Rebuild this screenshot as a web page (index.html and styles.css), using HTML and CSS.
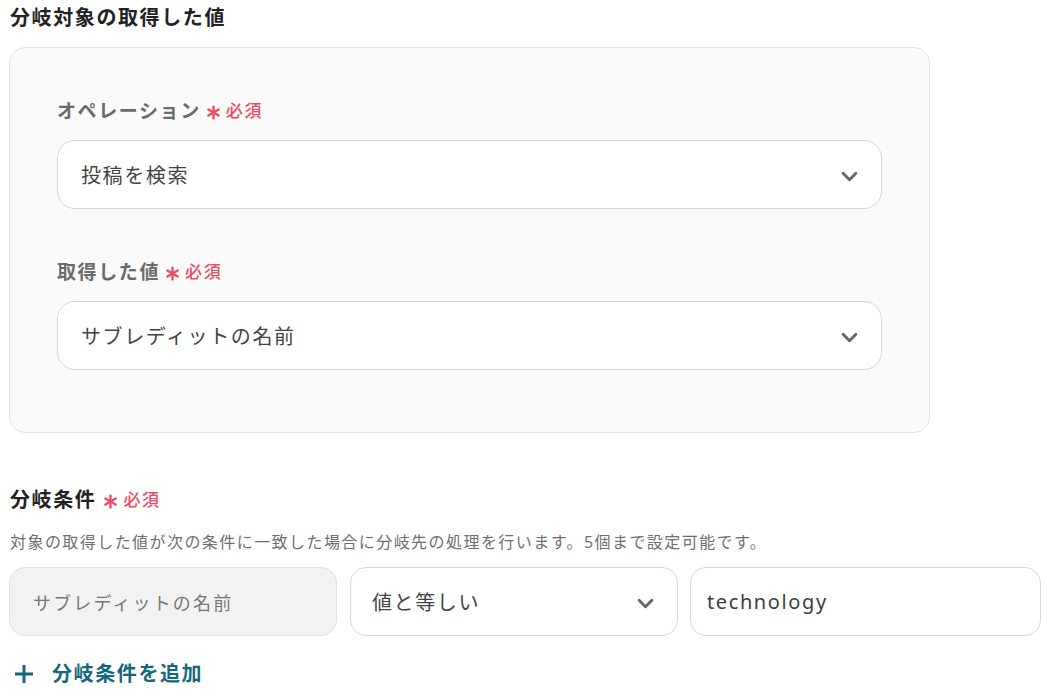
FILE: index.html
```html
<!DOCTYPE html>
<html lang="ja">
<head>
<meta charset="utf-8">
<title>分岐</title>
<link rel="stylesheet" href="styles.css">
</head>
<body>
<div class="page">
  <h2 class="section-title">分岐対象の取得した値</h2>
  <div class="panel">
    <div class="field">
      <div class="label">オペレーション<span class="req"><svg class="ast" viewBox="0 0 14 14"><g stroke="currentColor" stroke-width="2.2" stroke-linecap="round"><line x1="7" y1="1.5" x2="7" y2="12.5"/><line x1="2.2" y1="4.2" x2="11.8" y2="9.8"/><line x1="2.2" y1="9.8" x2="11.8" y2="4.2"/></g></svg>必須</span></div>
      <div class="select"><span class="value">投稿を検索</span><svg class="chev" viewBox="0 0 16 10"><polyline points="2,2 8,8 14,2" fill="none" stroke="currentColor" stroke-width="2.8" stroke-linecap="round" stroke-linejoin="round"/></svg></div>
    </div>
    <div class="field">
      <div class="label">取得した値<span class="req"><svg class="ast" viewBox="0 0 14 14"><g stroke="currentColor" stroke-width="2.2" stroke-linecap="round"><line x1="7" y1="1.5" x2="7" y2="12.5"/><line x1="2.2" y1="4.2" x2="11.8" y2="9.8"/><line x1="2.2" y1="9.8" x2="11.8" y2="4.2"/></g></svg>必須</span></div>
      <div class="select"><span class="value">サブレディットの名前</span><svg class="chev" viewBox="0 0 16 10"><polyline points="2,2 8,8 14,2" fill="none" stroke="currentColor" stroke-width="2.8" stroke-linecap="round" stroke-linejoin="round"/></svg></div>
    </div>
  </div>

  <h2 class="section-title second">分岐条件<span class="req title-req"><svg class="ast" viewBox="0 0 14 14"><g stroke="currentColor" stroke-width="2.2" stroke-linecap="round"><line x1="7" y1="1.5" x2="7" y2="12.5"/><line x1="2.2" y1="4.2" x2="11.8" y2="9.8"/><line x1="2.2" y1="9.8" x2="11.8" y2="4.2"/></g></svg>必須</span></h2>
  <p class="desc">対象の取得した値が次の条件に一致した場合に分岐先の処理を行います。5個まで設定可能です。</p>

  <div class="cond-row">
    <div class="cond cond-fixed">サブレディットの名前</div>
    <div class="cond cond-select"><span class="value">値と等しい</span><svg class="chev" viewBox="0 0 16 10"><polyline points="2,2 8,8 14,2" fill="none" stroke="currentColor" stroke-width="2.8" stroke-linecap="round" stroke-linejoin="round"/></svg></div>
    <div class="cond cond-input">technology</div>
  </div>

  <div class="add"><svg class="plus" viewBox="0 0 20 20"><g stroke="currentColor" stroke-width="3"><line x1="10" y1="1" x2="10" y2="19"/><line x1="1" y1="10" x2="19" y2="10"/></g></svg><span>分岐条件を追加</span></div>
</div>
</body>
</html>
```

FILE: styles.css
```css
* { box-sizing: border-box; }
html, body { margin: 0; padding: 0; background: #fff; }
body {
  font-family: "Noto Sans", "Noto Sans CJK JP", sans-serif;
  letter-spacing: 0.1em;
  color: #333;
}
.page {
  padding: 6px 0 0 9px;
}
.section-title {
  margin: 0;
  font-size: 20px;
  line-height: 24px;
  font-weight: 700;
  color: #222;
  padding-left: 1px;
  display: flex;
  align-items: center;
}
.section-title.second {
  margin-top: 55px;
}
.panel {
  margin-top: 17px;
  width: 921px;
  background: #fafafa;
  border: 1px solid #e4e4e4;
  border-radius: 16px;
  padding: 51px 47px 62px 47px;
  display: flex;
  flex-direction: column;
  gap: 51px;
}
.field {
  display: flex;
  flex-direction: column;
  gap: 17px;
}
.label {
  font-size: 19px;
  line-height: 24px;
  font-weight: 700;
  color: #6b6b6b;
  display: flex;
  align-items: center;
}
.req {
  display: inline-flex;
  align-items: center;
  color: #ec4a62;
  font-size: 17px;
  font-weight: 500;
  margin-left: 5px;
  letter-spacing: 0.1em;
}
.title-req {
  margin-left: 7px;
}
.ast {
  width: 15px;
  height: 15px;
  margin-right: 5px;
  margin-top: 3px;
}
.select {
  height: 69px;
  background: #fff;
  border: 1px solid #d2d6dd;
  border-radius: 18px;
  display: flex;
  align-items: center;
  justify-content: space-between;
  padding: 0 23px 0 23px;
  font-size: 20px;
  color: #444;
}
.chev {
  width: 17px;
  height: 11px;
  color: #666;
  margin-top: 3px;
}
.desc {
  margin: 19px 0 0 0;
  padding-left: 1px;
  font-size: 16px;
  line-height: 22px;
  color: #6f6f6f;
  letter-spacing: 0.09em;
}
.cond-row {
  margin-top: 14px;
  display: flex;
  gap: 13px;
  width: 1032px;
}
.cond {
  height: 69px;
  border-radius: 16px;
  border: 1px solid #d6d9df;
  display: flex;
  align-items: center;
  font-size: 20px;
  color: #444;
}
.cond-fixed {
  width: 328px;
  background: #f2f2f2;
  border-color: #e2e2e2;
  color: #777;
  font-size: 18px;
  letter-spacing: 0.12em;
  padding-left: 23px;
}
.cond-select {
  width: 328px;
  background: #fff;
  justify-content: space-between;
  padding: 0 23px 0 21px;
}
.cond-input {
  flex: 1;
  margin-left: -1px;
  background: #fff;
  padding-left: 16px;
  color: #3d3d3d;
  letter-spacing: 0.08em;
}
.add {
  margin-top: 26px;
  display: flex;
  align-items: center;
  font-size: 20px;
  line-height: 24px;
  font-weight: 700;
  color: #14687c;
  padding-left: 5px;
}
.plus {
  width: 20px;
  height: 20px;
  margin-right: 18px;
}
```
